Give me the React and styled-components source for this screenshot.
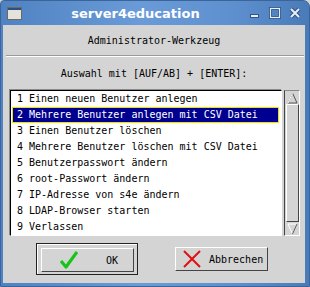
import React from 'react';
import styled, {createGlobalStyle} from 'styled-components';

const GlobalStyle = createGlobalStyle`
  html, body {
    margin: 0;
    padding: 0;
    background: #d4d4d4;
  }
`;

const items = [
    '1 Einen neuen Benutzer anlegen',
    '2 Mehrere Benutzer anlegen mit CSV Datei',
    '3 Einen Benutzer löschen',
    '4 Mehrere Benutzer löschen mit CSV Datei',
    '5 Benutzerpasswort ändern',
    '6 root-Passwort ändern',
    '7 IP-Adresse von s4e ändern',
    '8 LDAP-Browser starten',
    '9 Verlassen',
];

const WindowIcon = () => (
    <svg width="15" height="13" viewBox="0 0 15 13">
        <rect x="0.5" y="0.5" width="14" height="12" fill="#e4e2dc" stroke="#6d6a64"/>
        <rect x="1" y="1" width="13" height="2" fill="#2b4f86"/>
    </svg>
);

const TitleButtons = () => (
    <svg width="52" height="14" viewBox="0 0 52 14">
        <rect x="1.5" y="8.5" width="8" height="3" fill="#e8eef8" stroke="#30568c"/>
        <rect x="21.5" y="2.5" width="9" height="9" fill="none" stroke="#30568c" strokeWidth="3"/>
        <rect x="21.5" y="2.5" width="9" height="9" fill="none" stroke="#e8eef8" strokeWidth="1.2"/>
        <path d="M42 3 L50 11 M50 3 L42 11" stroke="#30568c" strokeWidth="4"/>
        <path d="M42 3 L50 11 M50 3 L42 11" stroke="#e8eef8" strokeWidth="2"/>
    </svg>
);

const CheckIcon = () => (
    <svg width="18" height="18" viewBox="0 0 18 18">
        <path d="M1 10 L6 16 L17 1" fill="none" stroke="#19c419" strokeWidth="3.2" strokeLinejoin="round"/>
    </svg>
);

const CrossIcon = () => (
    <svg width="18" height="18" viewBox="0 0 18 18">
        <path d="M1 1 L17 17 M17 1 L1 17" stroke="#e01010" strokeWidth="2"/>
    </svg>
);

const ArrowUp = () => (
    <svg width="11" height="12" viewBox="0 0 11 12">
        <path d="M5.5 1 L10 11 L1 11 Z" fill="#d4d4d4" stroke="#555" strokeWidth="1"/>
        <path d="M5.5 1 L1 11" stroke="#fff" strokeWidth="1"/>
    </svg>
);

const ArrowDown = () => (
    <svg width="11" height="12" viewBox="0 0 11 12">
        <path d="M1 1 L10 1 L5.5 11 Z" fill="#d4d4d4" stroke="#fff" strokeWidth="1"/>
        <path d="M10 1 L5.5 11" stroke="#555" strokeWidth="1"/>
    </svg>
);

export default function App() {
    return (
        <>
            <GlobalStyle/>
            <Window>
                <TitleBar>
                    <WindowIcon/>
                    <Title>server4education</Title>
                    <TitleButtons/>
                </TitleBar>
                <Body>
                    <Heading>Administrator-Werkzeug</Heading>
                    <Separator/>
                    <Prompt>Auswahl mit [AUF/AB] + [ENTER]:</Prompt>
                    <ListFrame>
                        <TextArea>
                            {items.map((item, i) => (
                                <Row key={item} $selected={i === 1}>{item}</Row>
                            ))}
                        </TextArea>
                        <ScrollBar>
                            <ScrollArrow><ArrowUp/></ScrollArrow>
                            <Thumb/>
                            <ScrollArrow><ArrowDown/></ScrollArrow>
                        </ScrollBar>
                    </ListFrame>
                    <ButtonRow>
                        <FocusFrame>
                            <Button $pad={18} $gap={28}>
                                <CheckIcon/>
                                <span>OK</span>
                            </Button>
                        </FocusFrame>
                        <Button $pad={7} $gap={8}>
                            <CrossIcon/>
                            <span>Abbrechen</span>
                        </Button>
                    </ButtonRow>
                </Body>
            </Window>
        </>
    );
}

const Window = styled.div`
  width: 310px;
  height: 287px;
  box-sizing: border-box;
  display: flex;
  flex-direction: column;
  background: linear-gradient(90deg, #4f82c2 0%, #6a9bd8 45%, #5e90cf 75%, #4a7bb9 100%);
  border: 1px solid #3b6498;
  border-radius: 4px 7px 0 0;
  overflow: hidden;
`;

const TitleBar = styled.div`
  height: 24px;
  flex-shrink: 0;
  display: flex;
  align-items: center;
  padding: 0 8px 0 6px;
`;

const Title = styled.div`
  flex: 1;
  text-align: center;
  color: #fff;
  font-family: "DejaVu Sans", sans-serif;
  font-weight: bold;
  font-size: 13px;
  margin-top: 1px;
`;

const Body = styled.div`
  flex: 1;
  margin: 0 4px 3px 2px;
  background: #d4d4d4;
  display: flex;
  flex-direction: column;
  font-family: "DejaVu Sans Mono", monospace;
  font-size: 10px;
  color: #000;
`;

const Heading = styled.div`
  margin-top: 8px;
  line-height: 16px;
  text-align: center;
`;

const Separator = styled.div`
  margin: 6px 1px 0 3px;
  border-top: 1px solid #9a9a9a;
  border-bottom: 1px solid #fff;
`;

const Prompt = styled.div`
  margin-top: 9px;
  line-height: 16px;
  text-align: center;
`;

const ListFrame = styled.div`
  margin: 8px 5px 0 7px;
  display: flex;
  gap: 2px;
`;

const TextArea = styled.div`
  flex: 1;
  background: #fff;
  border-top: 1px solid #000;
  border-left: 1px solid #000;
  border-bottom: 1px solid #fff;
  border-right: 1px solid #fff;
  box-shadow: -1px -1px 0 #8a8a8a;
`;

const Row = styled.div`
  height: 16px;
  box-sizing: border-box;
  margin: 0 2px 0 1px;
  padding-left: 4px;
  white-space: nowrap;
  background: ${p => p.$selected ? '#000090' : 'transparent'};
  color: ${p => p.$selected ? '#fff' : '#000'};
  border: 1px solid ${p => p.$selected ? '#f0e000' : 'transparent'};
  line-height: 14px;
`;

const ScrollBar = styled.div`
  width: 14px;
  display: flex;
  flex-direction: column;
  border-left: 1px solid #444;
  border-top: 1px solid #888;
  border-bottom: 1px solid #fff;
  border-right: 1px solid #fff;
`;

const ScrollArrow = styled.div`
  height: 13px;
  display: flex;
  align-items: center;
  justify-content: center;
`;

const Thumb = styled.div`
  flex: 1;
  margin: 0 0 0 1px;
  border-top: 1px solid #fff;
  border-left: 1px solid #fff;
  border-right: 1px solid #444;
  border-bottom: 1px solid #444;
  background: #d4d4d4;
`;

const ButtonRow = styled.div`
  margin-top: 7px;
  display: flex;
  align-items: center;
  justify-content: center;
  gap: 37px;
  padding-right: 4px;
`;

const FocusFrame = styled.div`
  padding: 4px 3px 2px 4px;
  border: 1px solid #222;
  box-shadow: inset 1px 1px 0 #fff;
`;

const Button = styled.div`
  width: 93px;
  height: 24px;
  box-sizing: border-box;
  display: flex;
  align-items: center;
  gap: ${p => p.$gap}px;
  padding-left: ${p => p.$pad}px;
  background: #d4d4d4;
  border-top: 1px solid #fff;
  border-left: 1px solid #fff;
  border-right: 1px solid #444;
  border-bottom: 1px solid #444;
  font-family: "DejaVu Sans Mono", monospace;
  font-size: 10px;
`;
